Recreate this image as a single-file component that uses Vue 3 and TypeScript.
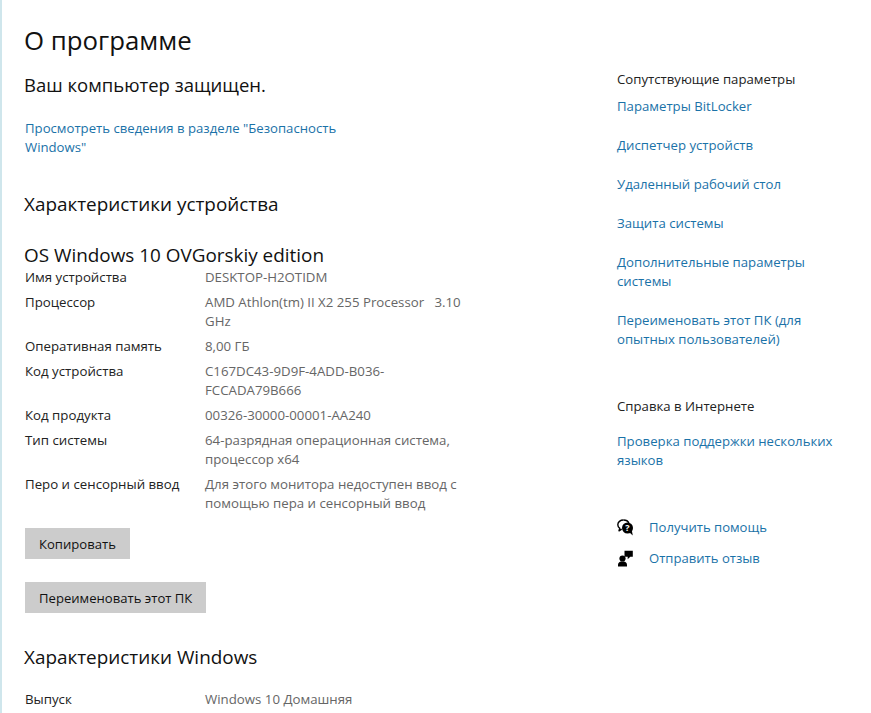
<script setup lang="ts">
const specs = [
  { label: 'Имя устройства', value: ['DESKTOP-H2OTIDM'] },
  { label: 'Процессор', value: ['AMD Athlon(tm) II X2 255 Processor   3.10', 'GHz'] },
  { label: 'Оперативная память', value: ['8,00 ГБ'] },
  { label: 'Код устройства', value: ['C167DC43-9D9F-4ADD-B036-', 'FCCADA79B666'] },
  { label: 'Код продукта', value: ['00326-30000-00001-AA240'] },
  { label: 'Тип системы', value: ['64-разрядная операционная система,', 'процессор x64'] },
  { label: 'Перо и сенсорный ввод', value: ['Для этого монитора недоступен ввод с', 'помощью пера и сенсорный ввод'] },
]

const related = [
  ['Параметры BitLocker'],
  ['Диспетчер устройств'],
  ['Удаленный рабочий стол'],
  ['Защита системы'],
  ['Дополнительные параметры', 'системы'],
  ['Переименовать этот ПК (для', 'опытных пользователей)'],
]
</script>

<template>
  <div class="page">
    <main class="content">
      <h1 class="title">О программе</h1>
      <p class="status">Ваш компьютер защищен.</p>
      <a class="link security">Просмотреть сведения в разделе "Безопасность<br />Windows"</a>

      <h2 class="section device-head">Характеристики устройства</h2>
      <h3 class="section edition">OS Windows 10 OVGorskiy edition</h3>

      <dl class="specs">
        <div v-for="row in specs" :key="row.label" class="spec">
          <dt>{{ row.label }}</dt>
          <dd>
            <span v-for="line in row.value" :key="line" class="line">{{ line }}</span>
          </dd>
        </div>
      </dl>

      <div class="buttons">
        <button class="btn" type="button">Копировать</button>
        <button class="btn" type="button">Переименовать этот ПК</button>
      </div>

      <h2 class="section windows-head">Характеристики Windows</h2>
      <dl class="specs windows-specs">
        <div class="spec">
          <dt>Выпуск</dt>
          <dd>Windows 10 Домашняя</dd>
        </div>
      </dl>
    </main>

    <aside class="side">
      <div class="side-title">Сопутствующие параметры</div>
      <ul class="side-links">
        <li v-for="item in related" :key="item[0]">
          <a class="link">
            <span v-for="line in item" :key="line" class="line">{{ line }}</span>
          </a>
        </li>
      </ul>

      <div class="side-title help-title">Справка в Интернете</div>
      <a class="link lang-link">Проверка поддержки нескольких<br />языков</a>

      <div class="actions">
        <div class="action">
          <svg class="icon" width="17" height="17" viewBox="0 0 17 17">
            <path d="M6.500 1C3.300 1 .8 3 .8 5.700c0 1.500.8 2.800 2 3.600L2 11.800l2.700-1.700" fill="none" stroke="#000" stroke-width="1.400" stroke-linejoin="round" />
            <path d="M6.500 1c2.500 0 4.600 1.100 5.400 3" fill="none" stroke="#000" stroke-width="1.400" />
            <circle cx="10.500" cy="9" r="5.500" fill="#000" />
            <path d="M12.500 13.500l3.300 2.900-1-5z" fill="#000" />
            <text x="10.500" y="12.200" class="q">?</text>
          </svg>
          <a class="link">Получить помощь</a>
        </div>
        <div class="action">
          <svg class="icon" width="17" height="17" viewBox="0 0 17 17">
            <circle cx="5.500" cy="8.500" r="3.100" fill="#000" />
            <path d="M1 16.500v-1.700c0-1.900 1.500-3.200 3.300-3.200h2.400c1.800 0 3.300 1.300 3.300 3.200v1.700z" fill="#000" />
            <path d="M7.500 .8h8.300v6h-2.500l-2.600 2.400V6.800H7.500z" fill="#000" />
          </svg>
          <a class="link">Отправить отзыв</a>
        </div>
      </div>
    </aside>
  </div>
</template>

<style>
html,
body {
  margin: 0;
  background: #fff;
  overflow: hidden;
}
</style>

<style scoped>
.page {
  box-sizing: border-box;
  width: 871px;
  height: 713px;
  overflow: hidden;
  display: flex;
  border-left: 2px solid #cfe6ec;
  font-family: "Open Sans", "Noto Sans", sans-serif;
  font-size: 13.25px;
  line-height: 19px;
  color: #111;
  background: #fff;
}

.content {
  width: 592px;
  padding: 22px 0 0 23px;
  box-sizing: border-box;
  flex-shrink: 0;
}

.title {
  margin: 0 0 0 -1px;
  font-size: 25.8px;
  line-height: 36px;
  font-weight: 400;
  color: #111;
}

.status {
  margin: 14px 0 0 -1px;
  font-size: 18.5px;
  line-height: 26px;
}

.link {
  color: #1a72a8;
  cursor: pointer;
}

.security {
  display: block;
  margin-top: 21px;
  line-height: 18.5px;
  font-size: 13.17px;
}

.section {
  margin: 0 0 0 -1px;
  font-size: 18.9px;
  line-height: 26px;
  font-weight: 400;
}

.device-head {
  margin-top: 35px;
}

.edition {
  margin-top: 25px;
}

.specs {
  margin: 0;
}

.spec {
  display: grid;
  grid-template-columns: 180px 265px;
  margin-bottom: 6px;
}

.spec dt {
  color: #222;
}

.spec dd {
  margin: 0;
  color: #666;
}

.line {
  display: block;
  white-space: pre;
}

.buttons {
  margin-top: 15px;
  display: flex;
  flex-direction: column;
  align-items: flex-start;
  gap: 23px;
}

.btn {
  height: 31px;
  padding: 1px 14px 0;
  border: none;
  background: #ccc;
  color: #111;
  font: inherit;
  font-size: 13.1px;
}

.windows-head {
  margin-top: 31px;
}

.windows-specs {
  margin-top: 20px;
}

.side {
  padding-top: 70px;
  padding-left: 23px;
  font-size: 13.2px;
}

.side-title {
  color: #222;
}

.side-links {
  list-style: none;
  margin: 8px 0 0;
  padding: 0;
  display: flex;
  flex-direction: column;
  gap: 20px;
}

.help-title {
  margin-top: 48px;
}

.lang-link {
  display: block;
  margin-top: 16px;
}

.actions {
  margin-top: 48px;
  display: flex;
  flex-direction: column;
  gap: 12px;
  font-size: 13.1px;
}

.action {
  display: flex;
  align-items: center;
  gap: 15px;
}

.icon {
  flex-shrink: 0;
}

.q {
  fill: #fff;
  font-size: 9px;
  font-weight: 700;
  text-anchor: middle;
}
</style>
